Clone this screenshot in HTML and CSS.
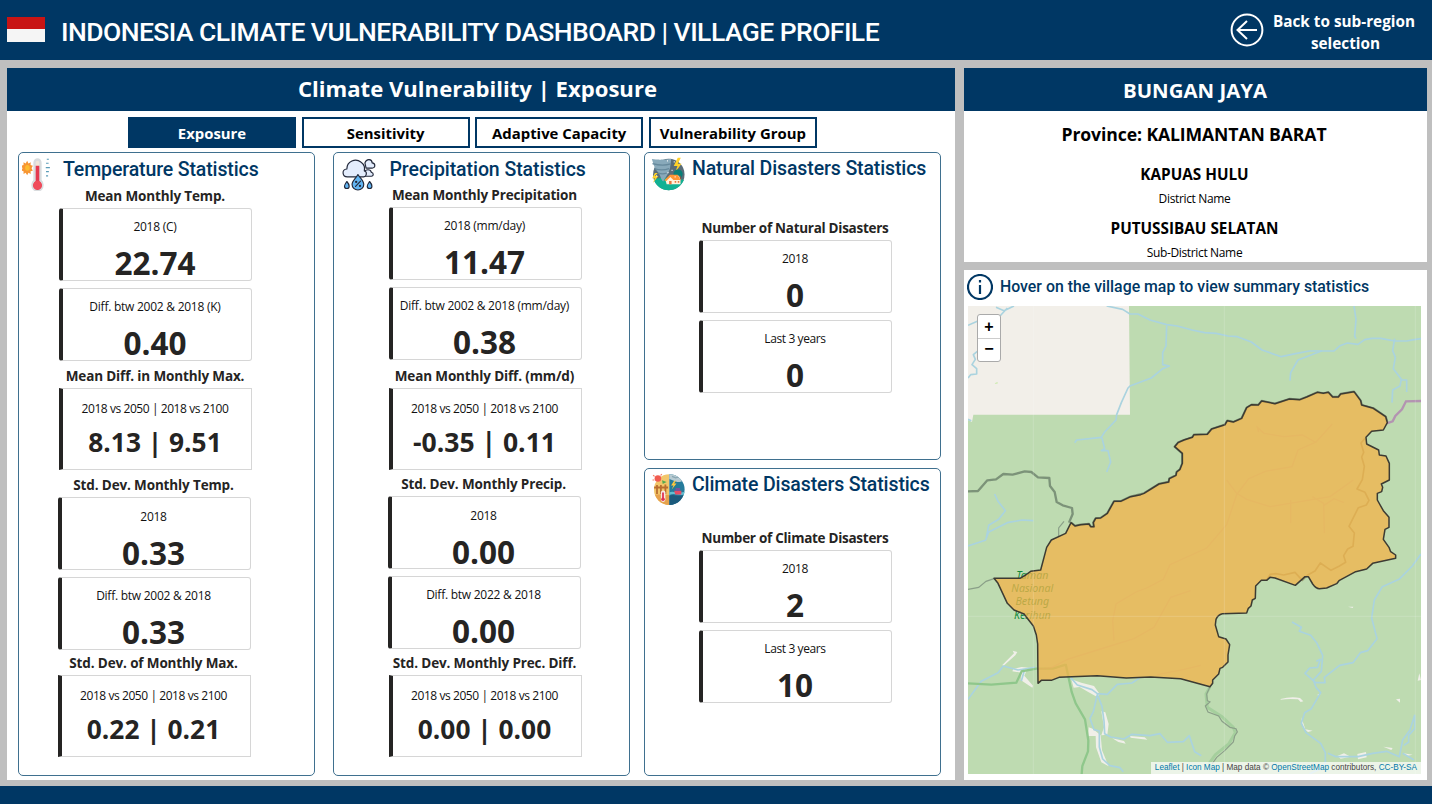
FILE: index.html
```html
<!DOCTYPE html>
<html lang="en">
<head>
<meta charset="utf-8">
<title>Indonesia Climate Vulnerability Dashboard</title>
<link rel="stylesheet" href="styles.css">
</head>
<body>
<header class="topbar">
  <div class="flag"><span class="flag-red"></span></div>
  <h1 class="topbar-title">INDONESIA CLIMATE VULNERABILITY DASHBOARD | VILLAGE PROFILE</h1>
  <svg class="back-icon" viewBox="0 0 34 34"><circle cx="17" cy="17" r="15.4"/><path d="M27 17H8M17 8L7.5 17L17 26"/></svg>
  <div class="back-text">Back to sub-region<br><span>selection</span></div>
</header>
<main class="board">
  <section class="panel main-panel">
    <h2 class="panel-head">Climate Vulnerability | Exposure</h2>
    <nav class="tabs">
      <div class="tab active">Exposure</div>
      <div class="tab">Sensitivity</div>
      <div class="tab">Adaptive Capacity</div>
      <div class="tab">Vulnerability Group</div>
    </nav>
    <div class="stats">
      <section class="stat temp">
        <div class="stat-head">
          <svg class="stat-icon" viewBox="0 0 120 120" preserveAspectRatio="none">
            <path d="M96 17h8M93 30h10M92 44h16M93 57h11M93 71h8" stroke="#5b9cb8" stroke-width="4"/>
            <path d="M20 22l5 9 9-4-1 9 9 2-5 8 5 8-9 2 1 9-9-4-5 8-6-8-8 4 0-9-9-2 5-8-5-8 9-2 0-9 8 4z" fill="#f79633"/>
            <circle cx="21" cy="45" r="9" fill="#fdbb2f"/>
            <path d="M44 28a16 14 0 0 1 32 0V84a24 22 0 1 1-32 0z" fill="#d9dcde"/>
            <path d="M53 28a7 6 0 0 1 14 0v14H53z" fill="#efe6d9"/>
            <path d="M53 38h14v50a17 15 0 1 1-14 0z" fill="#e5394f"/><ellipse cx="60" cy="101" rx="16" ry="14" fill="#f04b5a"/>
          </svg>
          <h3>Temperature Statistics</h3>
        </div>
        <h4>Mean Monthly Temp.</h4>
        <div class="card"><p>2018 (C)</p><b>22.74</b></div>
        <div class="card"><p>Diff. btw 2002 &amp; 2018 (K)</p><b>0.40</b></div>
        <h4>Mean Diff. in Monthly Max.</h4>
        <div class="card pair"><p>2018 vs 2050 | 2018 vs 2100</p><b>8.13 | 9.51</b></div>
        <h4 class="shift">Std. Dev. Monthly Temp.</h4>
        <div class="card shift low"><p>2018</p><b>0.33</b></div>
        <div class="card shift"><p>Diff. btw 2002 &amp; 2018</p><b>0.33</b></div>
        <h4 class="shift last">Std. Dev. of Monthly Max.</h4>
        <div class="card pair shift"><p>2018 vs 2050 | 2018 vs 2100</p><b>0.22 | 0.21</b></div>
      </section>
      <section class="stat rain">
        <div class="stat-head">
          <svg class="stat-icon" viewBox="0 0 120 120">
            <g fill="#e4edfd" stroke="#22283a" stroke-width="4" stroke-linejoin="round" stroke-linecap="round">
            <path d="M82 20C88 4 106 7 107 20C119 21 119 39 106 38H86z"/>
            <path d="M80 53c4-13 22-12 24 0 8 0 9 13 0 13H80z"/>
            <path d="M22 68C4 68 1 43 20 41C20 14 50 3 68 17C79 25 83 36 80 48C91 50 88 67 78 68z"/>
            <path d="M58 60C66 73 78 82 78 94a20 19 0 0 1-40 0C38 82 51 73 58 60z" fill="#62b5f2"/>
            <path d="M20 84c7 8 8 12 8 16a8 8 0 0 1-16 0c0-5 4-10 8-16zM98 84c7 8 8 12 8 16a8 8 0 0 1-16 0c0-5 4-10 8-16z" fill="#62b5f2"/>
            <path d="M67 83L50 101" /><circle cx="52" cy="85" r="2"/><circle cx="65" cy="99" r="2"/></g>
          </svg>
          <h3>Precipitation Statistics</h3>
        </div>
        <h4>Mean Monthly Precipitation</h4>
        <div class="card"><p>2018 (mm/day)</p><b>11.47</b></div>
        <div class="card"><p>Diff. btw 2002 &amp; 2018 (mm/day)</p><b>0.38</b></div>
        <h4 class="second">Mean Monthly Diff. (mm/d)</h4>
        <div class="card pair"><p>2018 vs 2050 | 2018 vs 2100</p><b class="signed">-0.35 | 0.11</b></div>
        <h4 class="shift">Std. Dev. Monthly Precip.</h4>
        <div class="card shift low"><p>2018</p><b>0.00</b></div>
        <div class="card shift"><p>Diff. btw 2022 &amp; 2018</p><b>0.00</b></div>
        <h4 class="last">Std. Dev. Monthly Prec. Diff.</h4>
        <div class="card pair"><p>2018 vs 2050 | 2018 vs 2100</p><b>0.00 | 0.00</b></div>
      </section>
      <div class="stat-stack">
        <section class="stat disaster natural">
          <div class="stat-head">
            <svg class="stat-icon" viewBox="0 0 120 120">
              <circle cx="61" cy="63" r="51" fill="#596c78"/>
              <path d="M12 80c20-9 68-7 98 1C99 105 80 114 60 114S22 104 12 80z" fill="#10b193"/>
              <path d="M6 13c20 3 42 2 63-1l-4 30c-6 22-14 28-22 44-10-9-7-19-17-30C13 41 11 28 6 13z" fill="#88a9ba"/>
              <path d="M8 28c18 5 43 6 59 1M14 44c15 5 33 5 48 0M27 59c9 3 18 3 27 0" stroke="#66899c" stroke-width="4" fill="none"/>
              <path d="M90 9L77 36h12l-7 20 20-28H90l10-19zM16 58L7 75h9l-7 17 18-24H16l9-10z" fill="#ffd128"/>
              <circle cx="91" cy="62" r="15" fill="#087f78"/><path d="M97 65c8 9 1 17 1 25h-9c1-9 5-15 8-25z" fill="#805342"/>
              <path d="M50 80l20-13 24 0 5 13v15H54z" fill="#fff2dd"/><path d="M46 82l19-18h25l9 17H76L66 71 53 84z" fill="#ff9634"/>
              <path d="M62 84h8v11h-8M80 84h5v6h-5M90 84h5v6h-5" fill="#e8783d"/>
              <path d="M31 14h3M55 19h3M70 50h3M80 71h3M57 57h3M77 22h3M20 68h3" stroke="#fff" stroke-width="4"/>
            </svg>
            <h3>Natural Disasters Statistics</h3>
          </div>
          <h4>Number of Natural Disasters</h4>
          <div class="card"><p>2018</p><b>0</b></div>
          <div class="card"><p>Last 3 years</p><b>0</b></div>
        </section>
        <section class="stat disaster climate">
          <div class="stat-head">
            <svg class="stat-icon" viewBox="0 0 120 120">
              <clipPath id="disc"><circle cx="61" cy="62" r="51"/></clipPath>
              <g clip-path="url(#disc)">
                <path d="M0 0H61V120H0z" fill="#f2c66a"/><path d="M61 0H120V120H61z" fill="#257b9b"/>
                <path d="M0 82c20-6 41-4 61-2v40H0z" fill="#e6a24c"/>
                <path d="M61 82c17-7 30 8 59-4v42H61z" fill="#1b5a7c"/>
                <path d="M61 71c16-7 30 8 59-4v9c-25 11-39-6-59 4z" fill="#64bed1"/>
                <path d="M61 8h48l4 22c-12 4-18 9-28 6l-24-9z" fill="#b8cbd2"/>
                <path d="M70 18l12 5 12-3" fill="none" stroke="#8ba7b2" stroke-width="4"/>
                <path d="M76 34l-9 14h8l-6 14 16-20h-8l7-10z" fill="#ffc83d"/>
                <path d="M77 66h24v12H81z" fill="#e44d65"/><path d="M82 57h15v10H82z" fill="#77549b"/>
                <path d="M10 55h47M20 47v30M33 47v30M48 45v32" stroke="#b96e2f" stroke-width="6"/><path d="M37 31l15 6-13 6z" fill="#56a950"/>
              </g>
              <circle cx="23" cy="25" r="11" fill="#f15b50"/><path d="M7 14l5 4M5 30h6M36 10l-4 5" stroke="#f47b63" stroke-width="4"/>
              <rect x="33" y="65" width="15" height="38" rx="7" fill="#f7e9e5"/><path d="M40 72v22" stroke="#df3553" stroke-width="6"/><circle cx="40" cy="94" r="6" fill="#df3553"/>
            </svg>
            <h3>Climate Disasters Statistics</h3>
          </div>
          <h4>Number of Climate Disasters</h4>
          <div class="card"><p>2018</p><b>2</b></div>
          <div class="card"><p>Last 3 years</p><b>10</b></div>
        </section>
      </div>
    </div>
  </section>
  <aside class="side">
    <section class="panel place">
      <h2 class="panel-head">BUNGAN JAYA</h2>
      <div class="province">Province: KALIMANTAN BARAT</div>
      <div class="region">KAPUAS HULU</div>
      <div class="region-label">District Name</div>
      <div class="region">PUTUSSIBAU SELATAN</div>
      <div class="region-label">Sub-District Name</div>
    </section>
    <section class="panel map-panel">
      <div class="hint">
        <svg viewBox="0 0 26 26"><circle cx="13" cy="13" r="12"/><path d="M13 11v9M13 6v2.6"/></svg>
        <span>Hover on the village map to view summary statistics</span>
      </div>
      <div class="map">
        <svg class="map-svg" viewBox="12 18 1359 1404">
          <rect x="12" y="18" width="1359" height="1404" fill="#bedbb1"/>
          <path d="M12 18H495L498 344H28L24 366L12 360z" fill="#f2efe9"/>
          <path d="M92 250l8-4 2 4-7 2z" fill="#cdebb0"/>
          <g class="settle">
            <path d="M115 1095l35-35-4-8 14 4-6 10-36 32zM148 1107l25-6 20 2 20 1-26 9-6 14 26 30-2 6-35-23 3-22-28-4z"/>
            <path d="M322 1138l30 10 38 10 17 24-6 10-27-15-27-16-18 2zM412 1234l12 3 10 35-4 32-18 2 8-24zM374 1282l12 4 24 20 4 45 20 48-22-12-16-45-1-34-22 0zM445 1315l35 8 5 8-22-5zM498 1308l44 4 8 7-50-6z"/>
            <path d="M950 1197q30-8 58-3l10 10-8 2-8-8q-26-3-52 1zM1012 1252l12 36 22 4-14 4-16-14zM1152 920l16 0-2 4zM1120 1368l20-8 20 10-30 6zM1180 1362l26-6 2 16-26 6zM1258 1340l28 4-4 6zM1318 1360l28 4-20 4zM1366 1120l5 20-10 2zM1060 1184l10-3-6 8zM1296 1198l12-2 0 12z"/>
          </g>
          <g class="river">
            <path d="M96 22l24 10 30-14M130 24l-22 24-34 2-20 18-14-4-28 12M40 154l-12 10 6 14-10 16 14 12 0 16-18 2-8 10M12 358l10 4"/>
            <path d="M428 18l48 10 22 14 24 0 36 18 50 14 32 4 44 12 38 8 34 2 36 8 28 2 42 16 32 24 58 20 46-10 38-7 74 0 18-16 22-8 32 4 20-14 22-4 26 0 42 8 36 0 22-4 38-6"/>
            <path d="M608 78l-2 60-10 20 0 36 20 4-20 8-34 28-64 24-6 6-20 44-14 36-2 16-34 36-10 16-74 8-6 8M414 414l8 32-10 6 20 0 8 34-12 30"/>
            <path d="M1170 18l6 40-4 50 4 8M1074 152l-72 28-22 38-2 24M1292 116l-6 36 8 20-6 34 24 32-4 20-22 12-2 38M1312 240l16 0 0 36"/>
            <path d="M92 582l10 22 22 28-20 26-30 18-8 42 8-22 56-28 44-8 34 2M12 738l36-12 18-6"/>
            <path d="M12 1198l40-54 50-26 16-20 44 12 52-8M180 1115l-8 28"/>
            <path d="M320 1133l20 22 44 14 16 12 30 2 30-30 44-4 24-16M400 1183l-12 52-10 20 12 34 16 4 0 48 10 36 22 20 30 6 10 12M400 1183l14 36 6 44 2 38 18 10 40 6 24-14 54 4 30-6 22 26 48-2 18-18 16 48 20 12"/>
            <path d="M984 966l28 16-6 12 34 12 18 22 18 38-4 48-24 26 8 22 14 16-28 48-20 12-10 32 14 28 44 32 14 28 0 30-18 20-30 14"/>
            <path d="M1371 762l-26 36-40 40-50 22-24 40-8 54 16 62-28 36-22 6-22 30-40 8-46 36 2 16-28 0-32-28 14-16 24-2 8-24-12 6M1092 1360l24 10 66 0 44-10 42-6 38 16 10-50 22-30 14-44 0 40-18 20 0 20-14 10M1316 1360l34 20"/>
          </g>
          <g class="route"><path d="M12 1150l70 4 75-6 16-34 44-8 50 0 38-12M305 1092l18 84 12 34 28 48 10 64-1 32-17 44-2 24"/></g>
          <path class="border-halo" d="M738 1160l-12 22 4 40 44 28 34 32 6 16-20 34-40 32-20 28"/>
          <path class="border" d="M12 574l30-1 28-32 26-3 22-16 28 2 36-10 20 2 20 16 34 2 2 24 14 18 6 30 18 10 28 8 2 18-11 26"/>
          <path class="border" d="M321 668L333 678L350 674L375 672L380 680H390L388 668L395 655L410 654L430 640L450 604H470L500 590L540 580L585 552L614 546L616 536L636 526L638 516L648 508L655 490V460L632 440L642 428L660 420L685 412L690 404L730 403L743 387L783 374L790 362L808 366L833 355L848 323L863 314L883 315L893 303L933 311L976 297L1008 299L1028 291L1060 277L1078 280L1093 277L1106 291H1123L1130 282L1170 275L1190 302L1193 315L1228 325L1265 350L1270 368"/>
          <path class="border-thin" d="M12 868l32-6 22-18 26-9M300 664l-16 20 0 28"/>
          <path class="border-thin" d="M738 1160l-10 22 2 20 8 4-14 12 8 18 32 12 10 16 24 18 18 4 4 10-8 12-4 18-26 26-24 20-14 20"/>
          <path d="M1268 370l18-6 8-16 20-20 12-24 45-1" fill="none" stroke="#b394b1" stroke-width="7"/>
          <g class="park">
            <text x="205" y="836">Taman</text><text x="205" y="876">Nasional</text><text x="205" y="916">Betung</text><text x="205" y="956">Kerihun</text>
          </g>
          <g class="streams">
            <path d="M884 396l-4-14 20 18 60 10 55-5 40 22 50-55M1052 428l-50 22-18 50-80 14-50 22-36 48-30 90-60 70-110 50-20 44-50 26-32 12-60 36-10 50 4 60M788 540l30 40 30 18 70 22 180-30 70-50M980 600l0 70M1045 590l34 20 2 90M1080 616l30-20 30 12"/>
            <path d="M220 1108l40-4 50-26 90-28 110-34 60-34 50-90 60-20M580 1124l80-16 50-12"/>
          </g>
          <path class="ridge" d="M1203 415l-12 14 8 28-6 14 8 28-6 40-16 28 24 10 12 24-8 14-24 8-28 56 16 20-4 40-16 8-12 20 6 20-20 12-24 12-32-22-16 24-22 12-16 16-22-24-34 8-24-4-16 2-12 18"/>
          <path class="village" d="M632 440L655 460V490L648 508L638 516L636 526L616 536L614 546L585 552L540 580L530 584L500 590L470 604H450L430 640L410 654L395 655L388 668L390 680H380L375 672L350 674L333 678L321 668L305 700L262 720L248 742L230 810L200 814L185 825L168 835L90 835L102 850L130 910L150 930L180 942L208 978L217 1005L221 1032L222 1150L232 1141H262L285 1132L400 1127L487 1134L560 1131L650 1136L738 1160L746 1150V1140L764 1122L768 1105L776 1102L792 1086V1065L797 1034L786 1017L764 1010L754 975L756 958Q762 944 775 941L848 939L853 925L861 918L865 900L874 895L875 858L892 841H908L918 832L933 834L994 856L1023 830H1033L1046 852Q1056 866 1066 866L1088 864L1118 851L1125 842L1175 815L1208 807L1226 790L1295 775V765L1280 755L1275 742L1258 718L1263 688L1275 682V652L1258 632L1240 600V580L1253 575L1256 562L1252 552L1276 540V490L1266 468L1246 465L1244 450L1208 432L1206 412L1223 394L1258 390L1270 368L1265 350L1228 325L1193 315L1190 302L1170 275L1130 282L1123 291H1106L1093 277L1078 280L1060 277L1028 291L1008 299L976 297L933 311L893 303L883 315L863 314L848 323L833 355L808 366L790 362L783 374L743 387L730 403L690 404L685 412L660 420L642 428z"/>
          <path d="M208 18V1422M781 18V1422M1354 18V1422M12 949H1371" class="seam"/>
        </svg>
        <div class="zoom"><span>+</span><span>−</span></div>
        <div class="credit"><a>Leaflet</a> | <a>Icon Map</a> | Map data © <a>OpenStreetMap</a> contributors, <a>CC-BY-SA</a></div>
      </div>
    </section>
  </aside>
</main>
<footer class="bottombar"></footer>
</body>
</html>
```
FILE: styles.css
```css
* { box-sizing: border-box; }
body {
  margin: 0;
  width: 1432px;
  height: 804px;
  overflow: hidden;
  display: flex;
  flex-direction: column;
  background: #bfbfbf;
  font-family: "Segoe UI", "Open Sans", "Noto Sans", sans-serif;
  color: #000;
}
h1, h2, h3, h4, p { margin: 0; }

.topbar { flex: none; height: 60px; background: #003764; display: flex; color: #fff; }
.flag { width: 38px; height: 25px; margin: 17px 16px 0 7px; background: #f5f5f5; }
.flag-red { display: block; height: 12px; background: #c81414; }
.topbar-title { flex: 1; font: 500 26.5px/63px Roboto, sans-serif; letter-spacing: -.55px; white-space: nowrap; }
.back-icon { width: 34px; height: 34px; margin-top: 13px; fill: none; stroke: #fff; stroke-width: 2; }
.back-text { width: 160px; margin: 10px 8px 0 0; font-size: 15.3px; line-height: 22px; font-weight: 700; text-align: center; }
.back-text span { padding-left: 3px; }

.board { flex: none; height: 726px; padding: 8px 5px 6px 7px; display: flex; gap: 9px; }
.panel { background: #fff; }
.main-panel { width: 948px; height: 712px; }
.panel-head { height: 43px; padding-right: 7px; background: #003764; color: #fff; text-align: center; font-weight: 700; font-size: 22.1px; line-height: 40px; }
.place .panel-head { font-size: 20.4px; line-height: 44px; padding-right: 1px; }
.tabs { display: grid; grid-template-columns: repeat(4, 168px); gap: 5.6px; margin: 6px 0 0 121px; }
.tab { height: 31px; border: 2px solid #003764; text-align: center; font-weight: 700; font-size: 14.9px; line-height: 28px; }
.tab.active { background: #003764; color: #fff; }

.stats { display: flex; padding: 4px 0 0 11px; }
.stat { width: 296.5px; height: 624px; border: 1.5px solid #3f708f; border-radius: 5px; margin-right: 18.5px; }
.stat-stack { display: flex; flex-direction: column; gap: 8px; margin-left: -4px; }
.stat-stack .stat { height: 308px; margin: 0; }
.stat-head { display: flex; height: 33px; }
.stat-icon { flex: none; }
.stat-head h3 { font: 500 19.5px/34px Roboto, sans-serif; letter-spacing: -.12px; color: #003764; white-space: nowrap; }
.stat h4 { color: #252423; font-size: 13.5px; line-height: 20px; letter-spacing: -.14px; font-weight: 700; text-align: center; white-space: nowrap; width: 192px; margin-bottom: 2px; }
.card { width: 193px; height: 73px; border: 1px solid #d6d6d6; border-left: 4px solid #252423; border-radius: 3px; text-align: center; padding: 8px 4px 0 0; color: #252423; margin-bottom: 7px; }
.card p { font-size: 12px; line-height: 20px; letter-spacing: -.25px; white-space: nowrap; color: #111; }
.card b { display: block; margin-top: 9px; font-size: 31.5px; line-height: 34px; font-weight: 700; }
.card.pair { height: 82.5px; border-radius: 0; padding-top: 10px; }
.card.pair p { letter-spacing: -.43px; }
.card.pair b { margin: 0; font-size: 26.3px; line-height: 46px; }
.card.pair .signed { font-size: 26.5px; }
.card.low { padding-top: 9px; }
.stat .card + h4 { margin-top: -2.5px; }
.stat .card + h4.last { margin-top: -4px; }

.temp .stat-icon { width: 31px; height: 37px; margin: 1px 0 0 3px; }
.temp h3 { padding-left: 10px; }
.temp h4, .temp .card { margin-left: 40px; }
.temp .shift { margin-left: 38.5px; }

.rain .stat-head { height: 32px; }
.rain .stat-icon { width: 35px; height: 35px; margin: 4px 0 0 7px; }
.rain h3 { padding-left: 13.5px; letter-spacing: -.07px; }
.rain h4, .rain .card { margin-left: 54.5px; }
.rain .shift { margin-left: 53.5px; }
.rain .card + h4.second { margin-top: -1.5px; }
.rain .card + h4.shift { margin-top: -3.5px; }
.rain .card + h4.last { margin-top: -3px; }

.disaster h3 { padding-left: 5px; line-height: 32px; }
.disaster h4, .disaster .card { margin-left: 54px; }
.disaster h4 { margin-top: 32px; letter-spacing: -.28px; }
.disaster .card p { letter-spacing: -.4px; }
.natural .stat-icon { width: 37px; height: 37px; margin: 2px 0 0 5px; }
.climate .stat-icon { width: 36px; height: 36px; margin: 2px 0 0 6px; }
.climate h4 { margin-top: 26px; }

.side { width: 463px; }
.place { height: 194px; text-align: center; }
.province { font-weight: 700; font-size: 17.6px; line-height: 46px; padding-right: 3px; letter-spacing: -.1px; }
.region { font-weight: 700; font-size: 15.3px; line-height: 34px; padding-right: 2px; }
.region-label { font-size: 12px; line-height: 16px; margin-bottom: 4px; letter-spacing: -.35px; padding-right: 2px; }
.map-panel { height: 510px; margin-top: 8px; }
.hint { display: flex; height: 36px; padding: 4px 0 0 3px; font: 500 15.85px/25px Roboto, sans-serif; color: #003764; }
.hint svg { width: 26px; height: 26px; margin-right: 7px; fill: none; stroke: #003764; stroke-width: 2.2; }
.map { position: relative; width: 453px; height: 468px; margin-left: 4px; }
.map-svg { display: block; width: 453px; height: 468px; }
.river { fill: none; stroke: #aad3df; stroke-width: 5; stroke-linejoin: round; }
.streams { fill: none; stroke: #c4a5a0; stroke-opacity: .4; stroke-width: 4; }
.settle { fill: #f0efe9; }
.route { fill: none; stroke: #8fc78b; stroke-width: 7; }
.border { fill: none; stroke: #7c9379; stroke-width: 7; stroke-linejoin: round; }
.border-halo { fill: none; stroke: #a5cf9d; stroke-width: 9; }
.border-thin { fill: none; stroke: #8a9f88; stroke-width: 3.5; }
.park { font: italic 32px "Noto Sans", sans-serif; fill: #10893a; text-anchor: middle; }
.ridge { fill: none; stroke: #8a8050; stroke-opacity: .65; stroke-width: 5; stroke-linejoin: round; }
.village { fill: #f3b34a; fill-opacity: .75; stroke: #3c3b33; stroke-width: 4.5; stroke-linejoin: round; }
.seam { stroke: #fff; stroke-opacity: .2; stroke-width: 2.5; }
.zoom { position: absolute; left: 9px; top: 8px; width: 24px; height: 48px; border: 1px solid #aaa; border-radius: 3px; background: #fff; }
.zoom span { display: block; height: 23px; text-align: center; font: bold 16px/23px "Liberation Sans", sans-serif; }
.zoom span + span { border-top: 1px solid #ccc; line-height: 20px; }
.credit { position: absolute; right: 0; bottom: 0; padding: 0 4px; background: rgba(255,255,255,.7); font: 8.2px/12px "Liberation Sans", sans-serif; color: #444; white-space: nowrap; }
.credit a { color: #0078a8; }
.bottombar { height: 18px; background: #003764; }
```
